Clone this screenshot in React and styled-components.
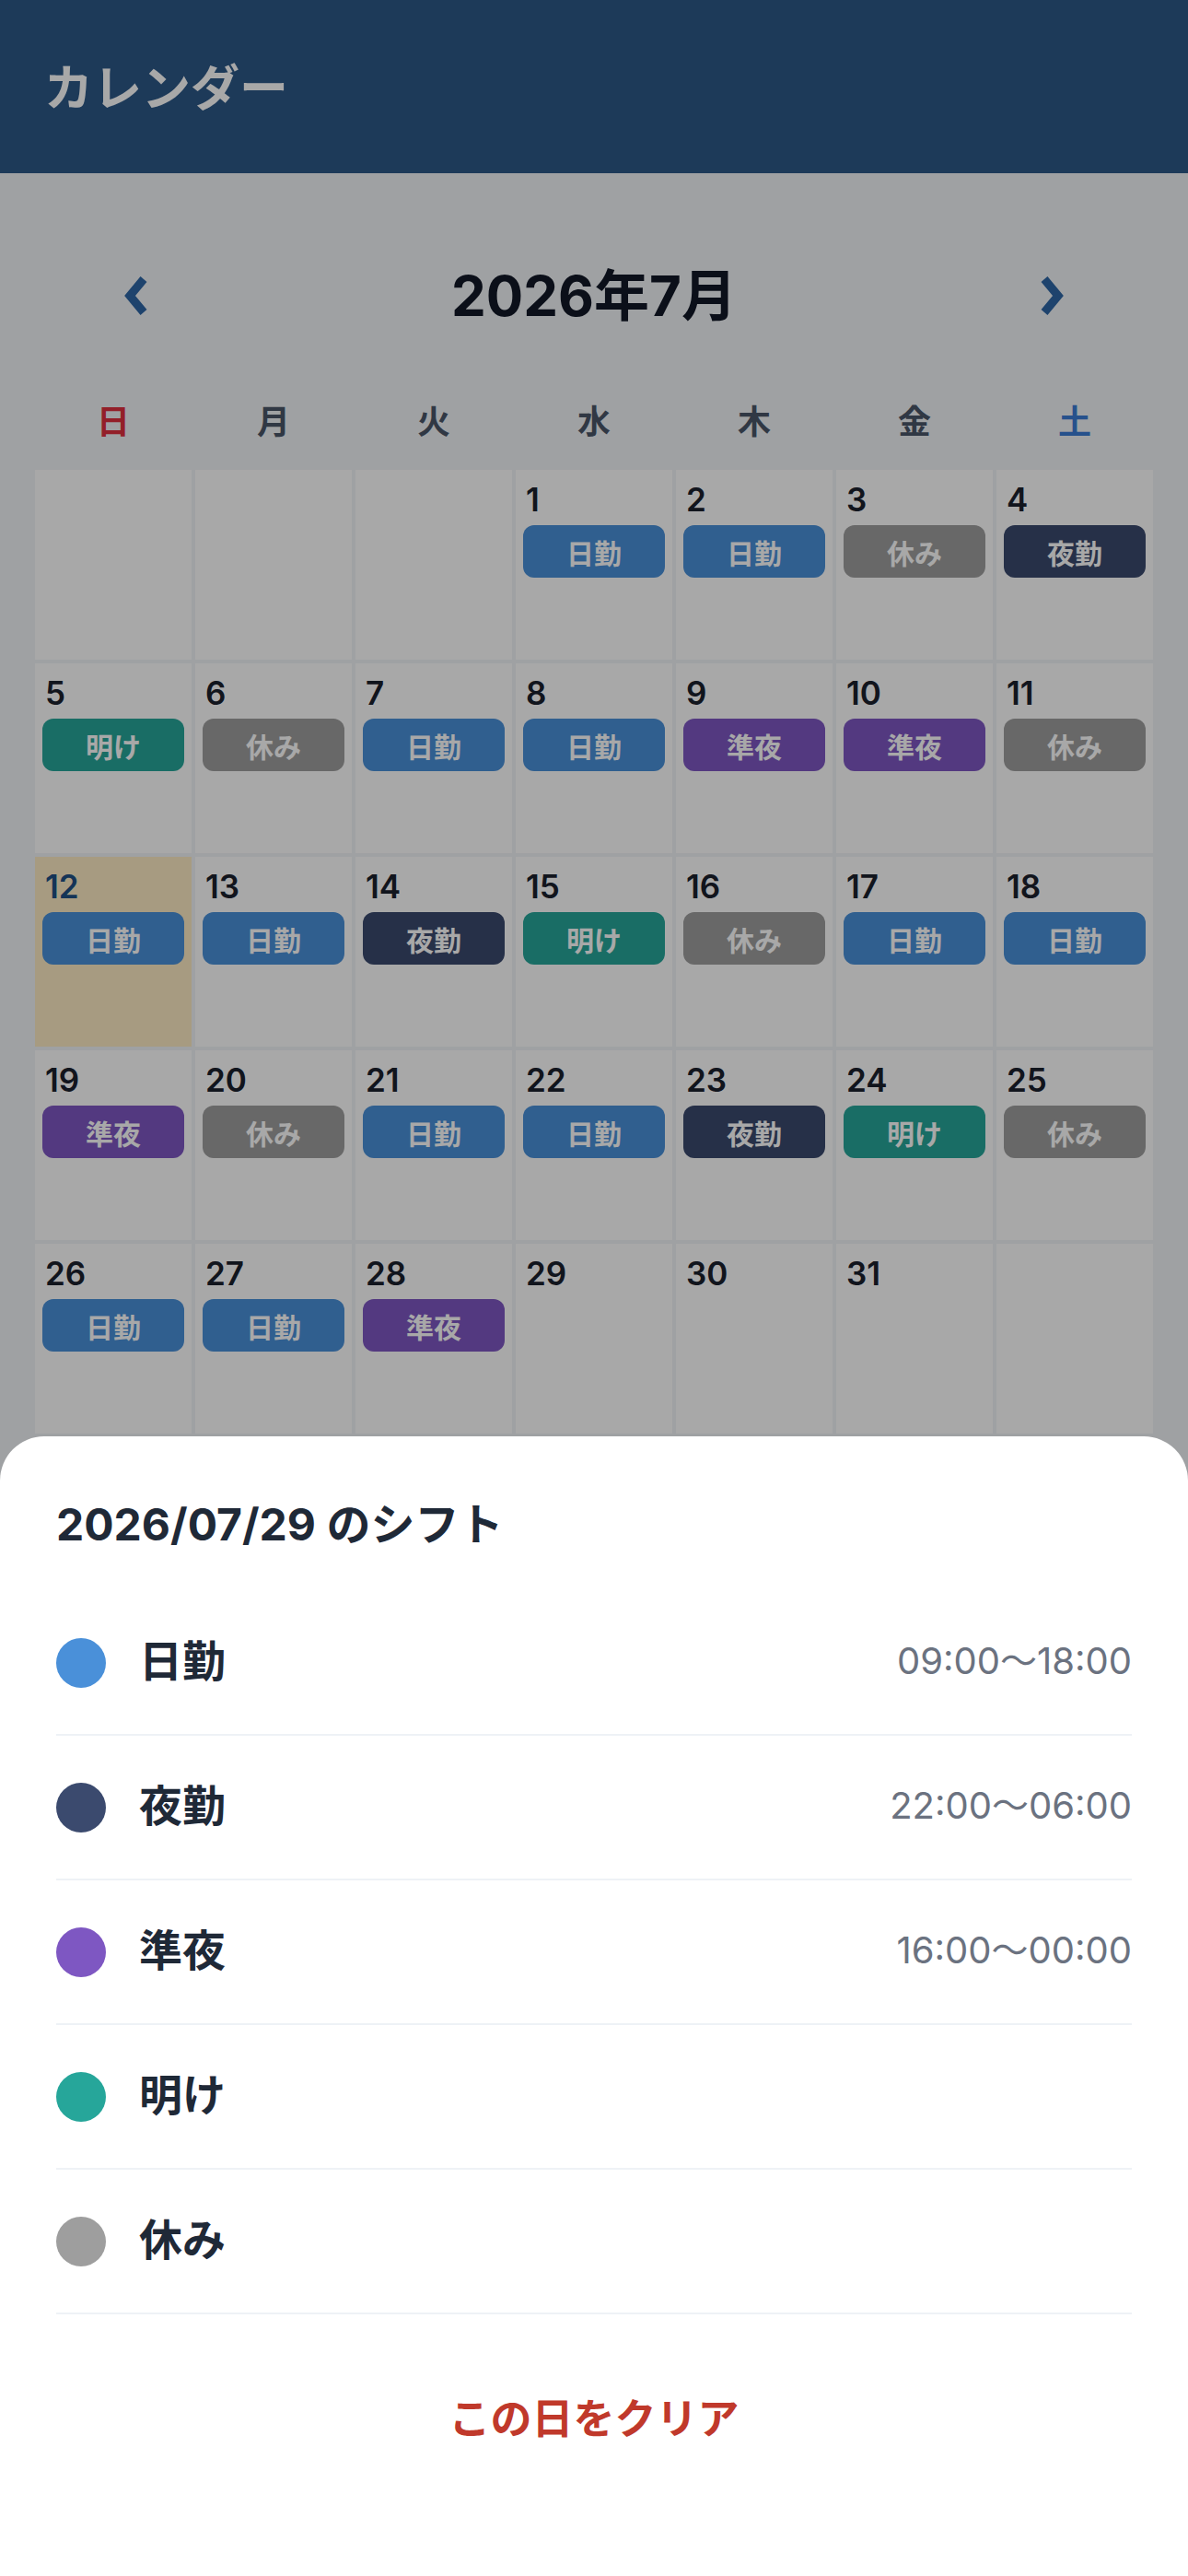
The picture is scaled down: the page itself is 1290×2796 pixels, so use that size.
import styled, { createGlobalStyle } from "styled-components";

const GlobalStyle = createGlobalStyle`
  html, body {
    margin: 0;
    padding: 0;
    background: #f2f4f7;
  }
  body {
    font-family: "Inter", "Noto Sans CJK JP", sans-serif;
    color: #1f2937;
  }
  * {
    box-sizing: border-box;
  }
`;

const SHIFTS = {
  day: { label: "日勤", color: "#4a90d9", time: "09:00〜18:00" },
  night: { label: "夜勤", color: "#3b4a6e", time: "22:00〜06:00" },
  late: { label: "準夜", color: "#7e57c2", time: "16:00〜00:00" },
  after: { label: "明け", color: "#26a69a", time: "" },
  off: { label: "休み", color: "#9e9e9e", time: "" },
};

const SCHEDULE = {
  1: "day", 2: "day", 3: "off", 4: "night",
  5: "after", 6: "off", 7: "day", 8: "day", 9: "late", 10: "late", 11: "off",
  12: "day", 13: "day", 14: "night", 15: "after", 16: "off", 17: "day", 18: "day",
  19: "late", 20: "off", 21: "day", 22: "day", 23: "night", 24: "after", 25: "off",
  26: "day", 27: "day", 28: "late",
};

const WEEKDAYS = ["日", "月", "火", "水", "木", "金", "土"];

const FIRST_WEEKDAY = 3;
const DAYS_IN_MONTH = 31;
const TODAY = 12;

const buildCells = () => {
  const cells = [];
  for (let i = 0; i < FIRST_WEEKDAY; i++) cells.push(null);
  for (let d = 1; d <= DAYS_IN_MONTH; d++) cells.push(d);
  while (cells.length % 7 !== 0) cells.push(null);
  return cells;
};

const Chevron = ({ dir }) => (
  <svg width="28" height="42" viewBox="0 0 28 42">
    <polyline
      points={dir === "left" ? "22,3 7,21 22,39" : "6,3 21,21 6,39"}
      fill="none"
      stroke="currentColor"
      strokeWidth="9"
      strokeLinejoin="miter"
    />
  </svg>
);

const App = () => {
  const cells = buildCells();
  const order = ["day", "night", "late", "after", "off"];

  return (
    <>
      <GlobalStyle />
      <Header>
        <HeaderTitle>カレンダー</HeaderTitle>
      </Header>
      <Main>
        <MonthNav>
          <NavButton aria-label="前の月">
            <Chevron dir="left" />
          </NavButton>
          <MonthTitle>2026年7月</MonthTitle>
          <NavButton aria-label="次の月">
            <Chevron dir="right" />
          </NavButton>
        </MonthNav>
        <WeekRow>
          {WEEKDAYS.map((w, i) => (
            <WeekLabel key={w} $tone={i === 0 ? "sun" : i === 6 ? "sat" : "normal"}>
              {w}
            </WeekLabel>
          ))}
        </WeekRow>
        <Grid>
          {cells.map((d, i) => {
            const shift = d && SCHEDULE[d] ? SHIFTS[SCHEDULE[d]] : null;
            return (
              <Cell key={i} $today={d === TODAY}>
                {d && <DayNumber $today={d === TODAY}>{d}</DayNumber>}
                {shift && <Badge $color={shift.color}>{shift.label}</Badge>}
              </Cell>
            );
          })}
        </Grid>
      </Main>

      <Overlay />

      <Sheet>
        <SheetTitle>2026/07/29 のシフト</SheetTitle>
        <ShiftList>
          {order.map((key) => (
            <ShiftRow key={key}>
              <Dot $color={SHIFTS[key].color} />
              <ShiftLabel>{SHIFTS[key].label}</ShiftLabel>
              {SHIFTS[key].time && <ShiftTime>{SHIFTS[key].time}</ShiftTime>}
            </ShiftRow>
          ))}
        </ShiftList>
        <ClearButton>この日をクリア</ClearButton>
      </Sheet>
    </>
  );
};

export default App;

const Header = styled.header`
  height: 188px;
  background: #2d5888;
  display: flex;
  align-items: center;
  padding: 0 48px;
`;

const HeaderTitle = styled.h1`
  margin: 4px 0 0;
  font-size: 53px;
  line-height: 60px;
  font-weight: 700;
  color: #ffffff;
`;

const Main = styled.main`
  padding: 73px 38px 40px;
`;

const MonthNav = styled.div`
  height: 120px;
  display: flex;
  align-items: center;
  justify-content: space-between;
  padding: 0 88px;
`;

const NavButton = styled.button`
  width: 44px;
  height: 80px;
  border: none;
  background: transparent;
  padding: 0;
  display: flex;
  align-items: center;
  justify-content: center;
  color: #2e67a6;
  cursor: pointer;
`;

const MonthTitle = styled.h2`
  margin: 0;
  font-size: 60px;
  line-height: 72px;
  font-weight: 700;
  color: #111827;
`;

const WeekRow = styled.div`
  display: grid;
  grid-template-columns: repeat(7, 1fr);
  gap: 4px;
  height: 72px;
  margin: 38px 0 19px;
`;

const WeekLabel = styled.div`
  display: flex;
  align-items: center;
  justify-content: center;
  font-size: 36px;
  font-weight: 700;
  color: ${(p) => (p.$tone === "sun" ? "#e0303f" : p.$tone === "sat" ? "#3a7bd5" : "#4a5568")};
`;

const Grid = styled.div`
  display: grid;
  grid-template-columns: repeat(7, 1fr);
  grid-auto-rows: 206px;
  gap: 4px;
`;

const Cell = styled.div`
  background: ${(p) => (p.$today ? "#fdecc4" : "#ffffff")};
  padding: 11px 8px 8px;
  display: flex;
  flex-direction: column;
`;

const DayNumber = styled.div`
  font-size: 35px;
  line-height: 42px;
  font-weight: 600;
  padding-left: 3px;
  color: ${(p) => (p.$today ? "#1f4f85" : "#1a202c")};
`;

const Badge = styled.div`
  margin-top: 7px;
  height: 57px;
  border-radius: 12px;
  background: ${(p) => p.$color};
  color: #ffffff;
  font-size: 30px;
  font-weight: 700;
  display: flex;
  align-items: center;
  justify-content: center;
`;

const Overlay = styled.div`
  position: fixed;
  inset: 0;
  background: rgba(0, 0, 0, 0.34);
`;

const Sheet = styled.section`
  position: fixed;
  left: 0;
  right: 0;
  bottom: 0;
  background: #ffffff;
  border-radius: 48px 48px 0 0;
  padding: 66px 61px 106px;
`;

const SheetTitle = styled.h3`
  margin: 0 0 42px;
  font-size: 48px;
  line-height: 60px;
  font-weight: 700;
  color: #1f2937;
`;

const ShiftList = styled.ul`
  list-style: none;
  margin: 0;
  padding: 0;
`;

const ShiftRow = styled.li`
  height: 157px;
  display: flex;
  align-items: center;
  border-bottom: 2px solid #eef2f6;
`;

const Dot = styled.span`
  width: 54px;
  height: 54px;
  border-radius: 50%;
  background: ${(p) => p.$color};
  flex-shrink: 0;
  margin-right: 36px;
`;

const ShiftLabel = styled.span`
  font-size: 47px;
  line-height: 56px;
  font-weight: 600;
  color: #1f2937;
  margin-top: -4px;
`;

const ShiftTime = styled.span`
  margin-left: auto;
  font-size: 40px;
  line-height: 48px;
  color: #6b7280;
  margin-top: -4px;
`;

const ClearButton = styled.button`
  display: block;
  width: 100%;
  height: 120px;
  margin-top: 50px;
  margin-bottom: 8px;
  border: none;
  background: transparent;
  font-family: "Inter", "Noto Sans CJK JP", sans-serif;
  font-size: 45px;
  font-weight: 700;
  color: #c0392b;
  cursor: pointer;
`;
